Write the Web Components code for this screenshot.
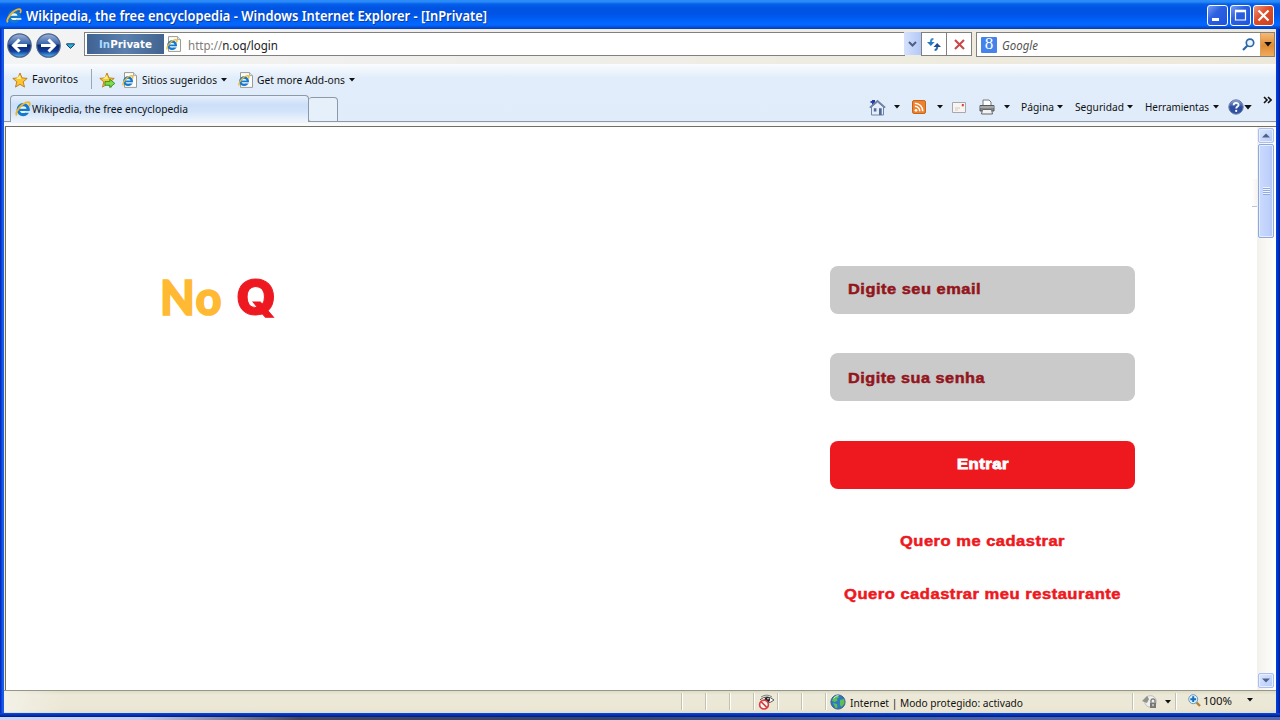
<!DOCTYPE html>
<html lang="es"><head><meta charset="utf-8"><title>Wikipedia, the free encyclopedia</title>
<style>html,body{margin:0;width:1280px;height:720px;overflow:hidden;background:#fff}</style></head>
<body><xp-window></xp-window>
<script>
const define=(name,css,html,after)=>customElements.define(name,class extends HTMLElement{
  constructor(){super();this.attachShadow({mode:'open'}).innerHTML=`<style>:host{display:block;box-sizing:border-box}*{box-sizing:border-box}${css}</style>${html}`}
  connectedCallback(){const m=this.getAttribute('m');if(m)this.style.marginLeft=m+'px';if(after)after(this)}
});

/* A label whose glyphs are condensed or widened so that its line is exactly "w" pixels wide. */
define('x-text',':host{white-space:nowrap;flex:none;font-family:"Noto Sans","Open Sans",sans-serif;line-height:1.2}span{display:inline-block;transform-origin:0 50%}','<span><slot></slot></span>',el=>{
  const w=+el.getAttribute('w');el.style.width=w+'px';
  const s=el.shadowRoot.querySelector('span');
  s.style.transform=`scaleX(${(w/s.getBoundingClientRect().width).toFixed(4)})`;
});

const E='<circle cx="8.2" cy="8.7" r="5" fill="#e9f5fd" stroke="#1478cc" stroke-width="3.2"/><path d="M4.5 8.9h9.8" stroke="#1478cc" stroke-width="2.2"/><path d="M10.4 10.1h5v1.7h-5z" fill="#e4effb"/><path d="M1.8 14.4C-.5 11.5 6.8 1.6 13.2 1.1c2.3 0 1.7 2.6.8 4" fill="none" stroke="#eeb62b" stroke-width="1.8"/>';
const nav=(p,i)=>`<defs><linearGradient id="n${i}" x2="0" y2="1"><stop stop-color="#9fb5d8"/><stop offset=".42" stop-color="#3b67ad"/><stop offset=".5" stop-color="#08296f"/><stop offset=".75" stop-color="#123f9c"/><stop offset="1" stop-color="#54c1f5"/></linearGradient></defs><circle cx="12.5" cy="12.5" r="11.7" fill="url(#n${i})" stroke="#4d6289" stroke-width="1.2"/><path d="${p}" fill="none" stroke="#fff" stroke-width="3"/>`;
const STAR='M8 1l2 4.9 5.2.5-4 3.4 1.3 5.3L8 12.3l-4.5 2.8 1.3-5.3-4-3.4L6 5.9z';
const icons={
 e:['0 0 16 16',E],
 page:['0 0 16 16','<path d="M2.5.6h9l3 3v11.8h-12z" fill="#fdfdfb" stroke="#9c9b92"/><path d="M11.5.6v3h3" fill="#ddd" stroke="#9c9b92" stroke-width=".8"/><g transform="translate(0 2.8) scale(.74)">'+E+'</g>'],
 back:['0 0 25 25',nav('M20 12.5H7M12.5 6.5l-6 6 6 6','b')],
 fwd:['0 0 25 25',nav('M5 12.5H18M12.5 6.5l6 6-6 6','f')],
 histdrop:['0 0 9 6','<path d="M.7.8h7.6v1L4.5 5.4.7 1.8z" fill="#2cb0d8" stroke="#153f70"/>'],
 down:['0 0 6 4','<path d="M0 0h6L3 3.6z" fill="#111"/>'],
 star:['0 0 16 16',`<path d="${STAR}" fill="#fdc62e" stroke="#b9761d" stroke-width=".9"/><path d="M8 3l1 4H4z" fill="#fff08b"/>`],
 staradd:['0 0 16 16',`<path d="${STAR}" fill="#fdc62e" stroke="#b9761d" stroke-width=".9"/><path d="M8 3l1 4H4z" fill="#fff08b"/><path d="M6 9.6h4.8V7.2l5 4.2-5 4.2v-2.4H6z" fill="#7fdd4d" stroke="#2b8b1b" stroke-width=".9"/>`],
 chevd:['0 0 9 6','<path d="M1 1l3.5 3.5L8 1" fill="none" stroke="#4d6185" stroke-width="2"/>'],
 sbd:['0 0 8 5','<path d="M0 .5h8L4 4.5z" fill="#4d6185"/>'],
 sbu:['0 0 8 5','<path d="M0 4.5h8L4 .5z" fill="#4d6185"/>'],
 refresh:['0 0 14 13','<path d="M6.4 1C4.4 1 3.8 2 3.8 5" fill="none" stroke="#3a8fd0" stroke-width="2"/><path d="M0 4h7.6L3.8 8z" fill="#2876bd"/><path d="M7.6 12c2 0 2.7-1 2.7-4" fill="none" stroke="#2d6cb0" stroke-width="2"/><path d="M6.5 9H14l-3.8-4z" fill="#194f91"/>'],
 stop:['0 0 11 11','<path d="M1 1l9 9M10 1l-9 9" stroke="#c94746" stroke-width="2.1"/>'],
 mag:['0 0 13 13','<circle cx="8" cy="4.8" r="3.7" fill="#eaf6ff" stroke="#2d67a8" stroke-width="1.7"/><path d="M5.3 7.7L1 12" stroke="#2d67a8" stroke-width="2.2"/>'],
 home:['0 0 17 17','<path d="M3 1h3v5H3z" fill="#2539a0"/><path d="M2.5 8v8h12V8L8.5 3z" fill="#e5edf7" stroke="#6f84a6"/><path d="M.8 8.6L8.5 1.8l7.7 6.8" fill="none" stroke="#6f82a6" stroke-width="1.6"/><path d="M4.8 9.2h2.6v3.2H4.8zM10 9.2h2.7V16H10z" fill="#52699a"/><path d="M1.5 2h2v2h-2z" fill="#3342bf"/>'],
 rss:['0 0 14 14','<rect x=".5" y=".5" width="13" height="13" rx="1.6" fill="#ed812d" stroke="#c66516"/><circle cx="4" cy="10.3" r="1.4" fill="#fff"/><path d="M2.8 6.3a5 5 0 0 1 5 5M2.8 3.2a8 8 0 0 1 8 8" fill="none" stroke="#fff" stroke-width="1.5"/>'],
 mail:['0 0 14 11','<path d="M.5.5h13v10H.5z" fill="#f7f4f1" stroke="#a9a7ac"/><path d="M9.8 2h2v2.3h-2z" fill="#d3443f"/><path d="M3 6h5M3 8h3" stroke="#dac6c0"/>'],
 print:['0 0 16 16','<path d="M4 7V1h6l2 2v4" fill="#fff" stroke="#777"/><path d="M1 6.5h14V12H1z" fill="#848789" stroke="#55595d"/><path d="M1 8h14" stroke="#c5c8c9"/><path d="M3.5 10.5h9l1 4.5h-11z" fill="#f2f2f2" stroke="#666"/>'],
 help:['0 0 16 16','<defs><linearGradient id="h" x2="0" y2="1"><stop stop-color="#97abd8"/><stop offset=".5" stop-color="#2d4e9f"/><stop offset="1" stop-color="#304fa7"/></linearGradient></defs><circle cx="8" cy="8" r="7.2" fill="url(#h)" stroke="#6c7da5"/><path d="M5.6 6.3c0-3.4 5-3 5-.4 0 1.7-2.4 1.7-2.4 3.7" fill="none" stroke="#fff" stroke-width="1.8"/><circle cx="8.2" cy="11.9" r="1.1" fill="#fff"/>'],
 more:['0 0 9 8','<path d="M1 1l3 3-3 3M5 1l3 3-3 3" fill="none" stroke="#111" stroke-width="1.6"/>'],
 eye:['0 0 17 16','<path d="M2 5.8Q9 0 16 6 9.5 11.5 4 6.8" fill="#fff" stroke="#555"/><path d="M3 3Q9-.8 14 3" fill="none" stroke="#666" stroke-width=".8"/><circle cx="9.3" cy="5.6" r="2.7" fill="#222"/><circle cx="10" cy="4.7" r=".8" fill="#fff"/><circle cx="6" cy="10.6" r="4.4" fill="#fff" fill-opacity=".85" stroke="#d63e40" stroke-width="1.7"/><path d="M3 7.6l6 6" stroke="#d63e40" stroke-width="1.7"/>'],
 globe:['0 0 16 16','<circle cx="8" cy="8" r="7.1" fill="#2d78c6" stroke="#3a5c86"/><path d="M4 2.5l4-1 1 2-2 1 .5 2-2.5 1.6L2 7zM10 6l4-1 .6 4-2.8 4-2-2zM3 9l4 1 .6 3.5-2 .5z" fill="#5fc052"/><path d="M3.5 4.5q2-3 5-3" stroke="#c9ebff" fill="none"/>'],
 lock:['0 0 16 14','<circle cx="8.5" cy="6.4" r="5.8" fill="#efefeb" stroke="#bdbdb8"/><path d="M0 6l5-5 2 3-2 4z" fill="#92928e"/><path d="M8 7.5h6V13H8z" fill="#777"/><path d="M9 7.5V5.2q2-2.5 4 0v2.3" fill="none" stroke="#777" stroke-width="1.3"/><path d="M11 9v2.2" stroke="#fff"/>'],
 zoom:['0 0 13 13','<path d="M8 8l4 4" stroke="#b6803c" stroke-width="2.4"/><circle cx="5.2" cy="5.2" r="4.5" fill="#d9f0fd" stroke="#6d99bb"/><path d="M5.2 2.3v5.8M2.3 5.2h5.8" stroke="#176fbb" stroke-width="2"/>'],
 min:['0 0 21 21','<path d="M5 14.5h7" stroke="#fff" stroke-width="3"/>'],
 max:['0 0 21 21','<path d="M5.5 5.5h10v9.5h-10z" fill="none" stroke="#fff" stroke-width="1.2"/><path d="M5 6h11" stroke="#fff" stroke-width="2.6"/>'],
 close:['0 0 21 21','<path d="M5.5 5.5l10 10M15.5 5.5l-10 10" stroke="#fff" stroke-width="2.2"/>']
};
define('x-icon',':host{flex:none}svg{display:block;width:100%;height:100%}','<div style="display:contents"></div>',el=>{
  const [vb,body]=icons[el.getAttribute('n')],b=vb.split(' ');
  el.style.width=(el.getAttribute('w')||b[2])+'px';el.style.height=(el.getAttribute('h')||b[3])+'px';
  el.shadowRoot.querySelector('div').innerHTML=`<svg viewBox="${vb}">${body}</svg>`;
});

define('title-bar',`:host{display:flex;height:29px;align-items:center;padding:2px 6px 0 6px;background:linear-gradient(#2f8dfa 0,#2788f5 2px,#0660ea 4px,#0054e3 8px,#0054e5 14px,#0062fb 21px,#0468ff 25px,#034fdd 27px,#073bb0 29px)}
x-text{font-size:13.5px;font-weight:600;color:#fff;text-shadow:1px 1px #0b3d9e;padding-top:1px}
.btn{width:21px;height:21px;margin-left:2px;border:1px solid #fff;border-radius:3px;background:linear-gradient(135deg,#789df3,#2c60e0 40%,#1d55e0);display:flex;align-items:center;justify-content:center}.btn x-icon{margin:-1px}.x{background:linear-gradient(135deg,#ee987d,#df4d28 45%,#c94121)}`,
`<x-icon n="e" w="16" h="16"></x-icon><x-text m="4" w="461">Wikipedia, the free encyclopedia - Windows Internet Explorer - [InPrivate]</x-text>
<div class="btn" style="margin-left:auto"><x-icon n="min"></x-icon></div><div class="btn"><x-icon n="max"></x-icon></div><div class="btn x"><x-icon n="close"></x-icon></div>`);

define('address-row',`:host{display:flex;height:35px;padding:3px 0 0 3px;background:linear-gradient(90deg,#f3f4f4,#f0efed 30%,#eeebdf 70%,#ece8d9);align-items:flex-start}
.box{height:24px;background:#fff;border:1px solid #808080;display:flex;align-items:center;font-size:12px}
.priv{height:20px;width:77px;margin-left:2px;background:linear-gradient(90deg,#3f6293,#5a80ae 50%,#41638f);display:flex;align-items:center;padding-left:12px}
.priv x-text{font:bold 11px "DejaVu Sans",sans-serif;color:#fff}.priv i{font-style:normal;color:#a9dcff}
.url{color:#222}.url i{font-style:normal;color:#808078}
.dd{width:17px;height:23px;background:linear-gradient(90deg,#d6e2fc,#b2c8f6);display:flex;align-items:center;justify-content:center}
.b{width:26px;justify-content:center}
.g{width:16px;height:16px;margin-left:4px;background:#4583ec;border-radius:1px;color:#fff;font:17px/14px "Liberation Serif",serif;text-align:center}
.o{width:14px;height:23px;margin-left:auto;background:linear-gradient(#f4ba78,#e08c35 55%,#f0ab5c);display:flex;align-items:center;justify-content:center;border-left:1px solid #d9a066}`,
`<x-icon n="back" m="0" style="margin-top:1px"></x-icon><x-icon n="fwd" m="4" style="margin-top:1px"></x-icon><x-icon n="histdrop" m="5" style="margin-top:11px"></x-icon>
<div class="box" style="width:821px;margin-left:9px"><div class="priv"><x-text w="53"><i>In</i>Private</x-text></div><x-icon n="page" m="2"></x-icon><x-text class="url" m="6" w="90" style="padding-top:4px"><i>http://</i>n.oq/login</x-text></div>
<div class="dd" style="margin-left:-1px"><x-icon n="chevd"></x-icon></div><div class="box b"><x-icon n="refresh"></x-icon></div><div class="box b" style="margin-left:-1px"><x-icon n="stop"></x-icon></div>
<div class="box" style="width:299px;height:25px;margin-left:4px"><div class="g">8</div><x-text m="5" w="36" style="font-style:italic;color:#555;padding-top:3px">Google</x-text><x-icon n="mag" m="204"></x-icon><div class="o"><x-icon n="down" w="8" h="5"></x-icon></div></div>`);

define('favorites-row',`:host{display:flex;height:31px;padding-left:8px;align-items:center;font-size:11.5px;color:#111}.s{width:1px;height:20px;background:#9ea7b0;margin:-2px 0 0 13px}`,
`<x-icon n="star"></x-icon><x-text m="4" w="46" style="padding-bottom:1px">Favoritos</x-text><div class="s"></div><x-icon n="staradd" m="7"></x-icon><x-icon n="page" m="7"></x-icon><x-text m="4" w="75" style="padding-top:1px">Sitios sugeridos</x-text><x-icon n="down" m="4"></x-icon><x-icon n="page" m="11"></x-icon><x-text m="3" w="88" style="padding-top:1px">Get more Add-ons</x-text><x-icon n="down" m="4"></x-icon>`);

define('tab-row',`:host{display:flex;height:27px;color:#111;font-size:11.5px;align-items:flex-end;background:linear-gradient(#9097a0,#9097a0) 0 100%/100% 1px no-repeat}
.tab{width:299px;height:27px;margin-left:6px;padding-left:4px;border:1px solid #8e99a8;border-bottom:0;border-radius:4px 4px 0 0;background:linear-gradient(#e7f0fc,#cbdff8 35%,#d3e4f9 60%,#eff5fd);display:flex;align-items:center}
.new{width:29px;height:25px;border:1px solid #8e99a8;border-left:0;border-radius:3px 4px 0 3px;background:#e6f0fb}
.tools{flex:1;display:flex;align-items:center;height:27px;padding-bottom:3px}`,
`<div class="tab"><x-icon n="e"></x-icon><x-text m="1" w="156">Wikipedia, the free encyclopedia</x-text></div><div class="new"></div>
<div class="tools"><x-icon n="home" m="531"></x-icon><x-icon n="down" m="8"></x-icon><x-icon n="rss" m="12"></x-icon><x-icon n="down" m="11"></x-icon><x-icon n="mail" m="9"></x-icon><x-icon n="print" m="13"></x-icon><x-icon n="down" m="9"></x-icon><x-text m="11" w="33">Página</x-text><x-icon n="down" m="3" w="6"></x-icon><x-text m="12" w="49">Seguridad</x-text><x-icon n="down" m="3" w="6"></x-icon><x-text m="12" w="64">Herramientas</x-text><x-icon n="down" m="4" w="6"></x-icon><x-icon n="help" m="9"></x-icon><x-icon n="down" m="0" w="8" h="5"></x-icon><x-icon n="more" m="11" style="margin-bottom:14px"></x-icon></div>`);

define('no-logo',`:host{display:flex;width:130px;height:50px;color:#ffb932}x-text{font:900 47.5px/50px Lato,sans-serif;letter-spacing:1.5px;-webkit-text-stroke:1.6px currentColor}.q{color:#ed1820;font:800 49px/50px Inter,sans-serif;-webkit-text-stroke:1px currentColor;margin-top:1px;letter-spacing:0}`,
`<x-text w="63">No</x-text><x-text class="q" m="13" w="40">Q</x-text>`);
define('login-field',`:host{display:flex;height:48px;padding:0 18px 2px;border-radius:8px;background:#cacaca;color:#93151c;align-items:center}`,'<slot></slot>');
define('login-panel',`:host{display:flex;flex-direction:column;width:305px;color:#ed1820}
x-text{font:bold 14.7px/20px "Liberation Sans",sans-serif;letter-spacing:.45px;-webkit-text-stroke:.5px currentColor}.go{height:48px;border-radius:8px;background:#ee191f;color:#fff;display:flex;justify-content:center;align-items:center;padding-bottom:2px;margin-top:40px}`,
`<login-field><x-text w="133">Digite seu email</x-text></login-field><login-field style="margin-top:39px;padding:2px 18px 0"><x-text w="137">Digite sua senha</x-text></login-field><div class="go"><x-text w="52" style="-webkit-text-stroke-width:.9px">Entrar</x-text></div><x-text w="165" m="70" style="margin-top:42px">Quero me cadastrar</x-text><x-text w="277" m="14" style="margin-top:33px">Quero cadastrar meu restaurante</x-text>`);

define('scroll-bar',`:host{display:flex;flex-direction:column;width:18px;align-items:center;background:linear-gradient(90deg,#f3f1ec,#fefefb);padding:1px 0 2px}
.b{width:16px;height:15px;border:1px solid #aac0f3;border-radius:2px;background:linear-gradient(135deg,#dce7ff,#b5cafa);box-shadow:inset 0 0 0 1px #e5edff;display:flex;justify-content:center;align-items:center;flex:none}
.t{height:94px;margin-top:1px;background:linear-gradient(90deg,#cbdafd,#bed0fc 70%,#b2c7f6);border-color:#8fa9df}.g{width:7px;height:8px;background:repeating-linear-gradient(#eff4ff 0 1px,#8fa9e1 1px 2px)}`,
`<div class="b"><x-icon n="sbu"></x-icon></div><div class="b t"><div class="g"></div></div><div class="b" style="margin-top:auto"><x-icon n="sbd"></x-icon></div>`);
define('page-view',`:host{display:flex;height:564px;border-top:1px solid #716f64;border-left:1px solid #716f64;background:#fff;margin-left:1px}
.p{width:1251px;display:flex;align-items:flex-start}no-logo{margin:145px 0 0 154px}login-panel{margin:139px 0 0 540px}.edge{width:5px;height:28px;margin:52px 0 0 auto;background:linear-gradient(90deg,#fff,#f7f4f2);border-bottom:1px solid #b9c4d5}`,
`<div class="p"><no-logo></no-logo><login-panel></login-panel><div class="edge"></div></div><scroll-bar></scroll-bar>`);

define('status-bar',`:host{display:flex;height:23px;align-items:center;border-top:1px solid #969688;border-bottom:1px solid #d3e3ec;background:linear-gradient(90deg,#f3f1e7,transparent 60px),linear-gradient(#dedbc9,#ece9d8 4px,#ece7d5 18px,#e5e0cc);font-size:11.5px;color:#111}
.s{width:24px;height:17px;border-left:1px solid #c5c1af;box-shadow:inset 1px 0 #fff;display:flex;align-items:center;flex:none}`,
`<div class="s" style="margin-left:677px"></div><div class="s"></div><div class="s"></div><div class="s"><x-icon n="eye" m="4"></x-icon></div><div class="s"></div><div class="s"></div><div class="s" style="width:307px"><x-icon n="globe" m="4"></x-icon><x-text m="4" w="173" style="padding-top:2px">Internet | Modo protegido: activado</x-text></div><div class="s" style="width:43px"><x-icon n="lock" m="9"></x-icon><x-icon n="down" m="7"></x-icon></div><div class="s" style="width:90px;padding-bottom:3px"><x-icon n="zoom" m="12"></x-icon><x-text m="2" w="29" style="padding-top:2px">100%</x-text><x-icon n="down" m="15"></x-icon></div>`);

define('xp-window',`:host{width:1280px;height:720px;background:linear-gradient(90deg,#cbd6fa 0,#c3cbf0 140px,#45465c 300px,#34456e 600px,#4862a7 900px,#5269af)}
.frame{width:1280px;height:717px;background:linear-gradient(90deg,#0020bb,#1964f0 3px,#0842d4 5px,#0842d4 1275px,#003bda 1277px,#001d9c 1280px)}.mid{height:684px;width:1272px;margin-left:4px;background:#eceadd;overflow:hidden}
.chrome{height:62px;background:linear-gradient(#fafcfe,#e1edfa 14px,#e0ecf9 58px,#fafafa 59px)}
.bottom{height:4px;background:linear-gradient(#1549d2,#0630b4 50%,#001c83)}`,
`<div class="frame"><title-bar></title-bar><div class="mid"><address-row></address-row><div class="chrome"><favorites-row></favorites-row><tab-row></tab-row></div><page-view></page-view><status-bar></status-bar></div><div class="bottom"></div></div>`);
</script></body></html>
